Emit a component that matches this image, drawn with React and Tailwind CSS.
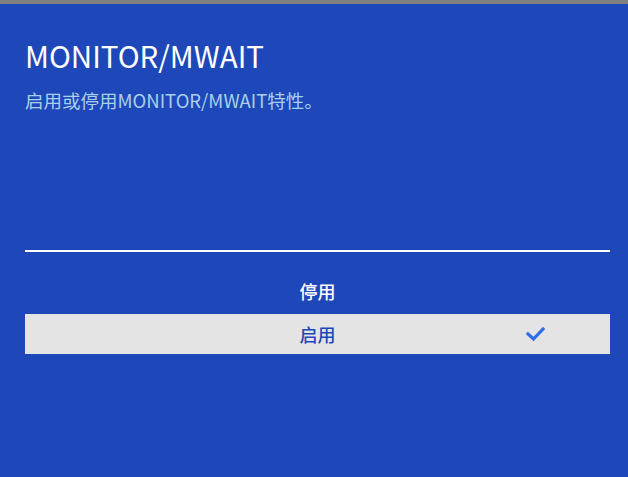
const options = [
  { label: "停用", selected: false },
  { label: "启用", selected: true },
];

export default function App() {
  return (
    <div
      className="w-[628px] h-[477px] bg-[#1e48b9] border-t-4 border-[#808080] overflow-hidden"
      style={{ fontFamily: '"Noto Sans CJK SC", "Noto Sans", sans-serif' }}
    >
      <div className="px-[25px] pt-[31px]">
        <h1 className="text-[29.5px] leading-[40px] text-white">MONITOR/MWAIT</h1>
        <p className="mt-[13px] text-[18.5px] leading-[24px] text-[#a9d0ec]">
          启用或停用MONITOR/MWAIT特性。
        </p>
        <div className="mt-[138px] h-[2px] w-[585px] bg-white" />
        <div className="mt-[19px] flex w-[585px] flex-col gap-[3px]">
          {options.map((o) => (
            <div
              key={o.label}
              className={`relative flex h-[40px] items-center justify-center text-[18px] font-medium ${
                o.selected ? "bg-[#e4e4e4] text-[#1e48b9]" : "text-white"
              }`}
            >
              {o.label}
              {o.selected && (
                <svg
                  className="absolute left-[500px] top-[12px]"
                  width="22"
                  height="16"
                  viewBox="0 0 22 16"
                  fill="none"
                  stroke="#2f6ee8"
                  strokeWidth="3.2"
                  strokeLinecap="square"
                >
                  <path d="M3 8 L8.5 13 L18 3" />
                </svg>
              )}
            </div>
          ))}
        </div>
      </div>
    </div>
  );
}
